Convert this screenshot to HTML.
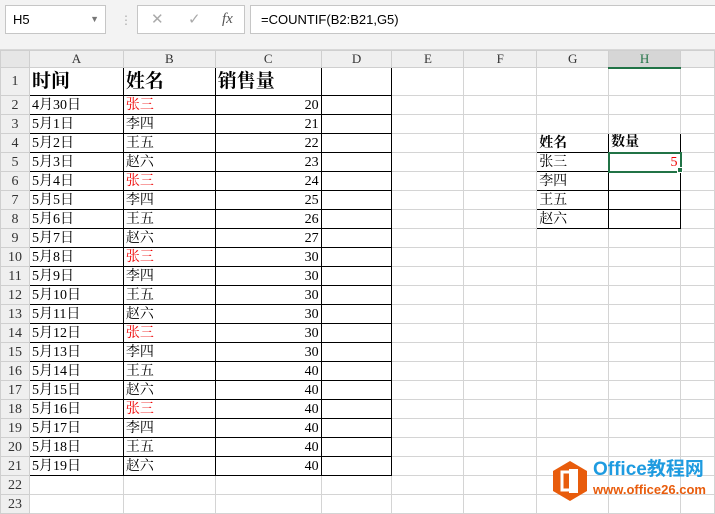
<!DOCTYPE html>
<html><head><meta charset="utf-8"><style>
*{margin:0;padding:0;box-sizing:border-box}
body{width:715px;height:509px;overflow:hidden;background:#fff;font-family:"Liberation Serif","Noto Serif CJK SC",serif;position:relative}
#top{position:absolute;left:0;top:0;width:715px;height:50px;background:#f3f3f3;border-bottom:1px solid #d8d8d8}
.box{position:absolute;background:#fff;border:1px solid #c6c6c6;top:5px;height:29px}
table{position:absolute;left:0;top:50px;border-collapse:collapse;table-layout:fixed}
td{height:19px;border:1px solid #d4d4d4;font-size:14px;line-height:17px;padding:0 2px;white-space:nowrap;overflow:hidden;color:#000}
tr.h td{height:17px;line-height:14px;background:#efefef;text-align:center;color:#333;font-size:13px;border-color:#cfcfcf}
td.r{background:#efefef;text-align:center;color:#333;font-size:14px;padding:0;border-color:#cfcfcf}
tr.t td{height:28px}
tr.t td.b{font-size:19px;font-weight:bold;line-height:25px}
td.k{border:1px solid #000}
td.n{text-align:right}
.red{color:#e00}
</style></head><body>
<div id="top">
<div class="box" style="left:5px;width:101px;font-family:'Liberation Sans',sans-serif;font-size:13px;line-height:27px;padding-left:7px">H5<span style="position:absolute;right:6px;top:0;font-size:9px;color:#777">▼</span></div>
<div style="position:absolute;left:120px;top:13px;color:#aaa;font-size:12px">⋮</div>
<div class="box" style="left:137px;width:108px;color:#aaa;font-family:'Liberation Sans',sans-serif;font-size:15px;line-height:27px"><span style="position:absolute;left:13px">✕</span><span style="position:absolute;left:50px">✓</span><span style="position:absolute;left:84px;color:#555;font-style:italic;font-family:'Liberation Serif',serif">fx</span></div>
<div class="box" style="left:250px;width:470px;font-family:'Liberation Sans',sans-serif;font-size:13px;line-height:27px;padding-left:10px">=COUNTIF(B2:B21,G5)</div>
</div>
<table>
<colgroup><col style="width:29px"><col style="width:94px"><col style="width:92px"><col style="width:106px"><col style="width:71px"><col style="width:72px"><col style="width:73px"><col style="width:72px"><col style="width:72px"><col style="width:34px"></colgroup>
<tr class="h"><td style="background:#e6e6e6"></td><td>A</td><td>B</td><td>C</td><td>D</td><td>E</td><td>F</td><td>G</td><td style="background:#d6d6d6;color:#217346;border-bottom:2px solid #217346">H</td><td></td></tr>
<tr class="t"><td class="r">1</td><td class="k b">时间</td><td class="k b">姓名</td><td class="k b">销售量</td><td class="k"></td><td></td><td></td><td></td><td></td><td></td></tr>
<tr><td class="r">2</td><td class="k">4月30日</td><td class="k red">张三</td><td class="k n">20</td><td class="k"></td><td></td><td></td><td></td><td></td><td></td></tr>
<tr><td class="r">3</td><td class="k">5月1日</td><td class="k">李四</td><td class="k n">21</td><td class="k"></td><td></td><td></td><td></td><td></td><td></td></tr>
<tr><td class="r">4</td><td class="k">5月2日</td><td class="k">王五</td><td class="k n">22</td><td class="k"></td><td></td><td></td><td class="k" style="font-weight:bold">姓名</td><td class="k" style="font-weight:bold">数量</td><td></td></tr>
<tr><td class="r">5</td><td class="k">5月3日</td><td class="k">赵六</td><td class="k n">23</td><td class="k"></td><td></td><td></td><td class="k">张三</td><td class="k n red" style="border:2px solid #217346">5</td><td></td></tr>
<tr><td class="r">6</td><td class="k">5月4日</td><td class="k red">张三</td><td class="k n">24</td><td class="k"></td><td></td><td></td><td class="k">李四</td><td class="k"></td><td></td></tr>
<tr><td class="r">7</td><td class="k">5月5日</td><td class="k">李四</td><td class="k n">25</td><td class="k"></td><td></td><td></td><td class="k">王五</td><td class="k"></td><td></td></tr>
<tr><td class="r">8</td><td class="k">5月6日</td><td class="k">王五</td><td class="k n">26</td><td class="k"></td><td></td><td></td><td class="k">赵六</td><td class="k"></td><td></td></tr>
<tr><td class="r">9</td><td class="k">5月7日</td><td class="k">赵六</td><td class="k n">27</td><td class="k"></td><td></td><td></td><td></td><td></td><td></td></tr>
<tr><td class="r">10</td><td class="k">5月8日</td><td class="k red">张三</td><td class="k n">30</td><td class="k"></td><td></td><td></td><td></td><td></td><td></td></tr>
<tr><td class="r">11</td><td class="k">5月9日</td><td class="k">李四</td><td class="k n">30</td><td class="k"></td><td></td><td></td><td></td><td></td><td></td></tr>
<tr><td class="r">12</td><td class="k">5月10日</td><td class="k">王五</td><td class="k n">30</td><td class="k"></td><td></td><td></td><td></td><td></td><td></td></tr>
<tr><td class="r">13</td><td class="k">5月11日</td><td class="k">赵六</td><td class="k n">30</td><td class="k"></td><td></td><td></td><td></td><td></td><td></td></tr>
<tr><td class="r">14</td><td class="k">5月12日</td><td class="k red">张三</td><td class="k n">30</td><td class="k"></td><td></td><td></td><td></td><td></td><td></td></tr>
<tr><td class="r">15</td><td class="k">5月13日</td><td class="k">李四</td><td class="k n">30</td><td class="k"></td><td></td><td></td><td></td><td></td><td></td></tr>
<tr><td class="r">16</td><td class="k">5月14日</td><td class="k">王五</td><td class="k n">40</td><td class="k"></td><td></td><td></td><td></td><td></td><td></td></tr>
<tr><td class="r">17</td><td class="k">5月15日</td><td class="k">赵六</td><td class="k n">40</td><td class="k"></td><td></td><td></td><td></td><td></td><td></td></tr>
<tr><td class="r">18</td><td class="k">5月16日</td><td class="k red">张三</td><td class="k n">40</td><td class="k"></td><td></td><td></td><td></td><td></td><td></td></tr>
<tr><td class="r">19</td><td class="k">5月17日</td><td class="k">李四</td><td class="k n">40</td><td class="k"></td><td></td><td></td><td></td><td></td><td></td></tr>
<tr><td class="r">20</td><td class="k">5月18日</td><td class="k">王五</td><td class="k n">40</td><td class="k"></td><td></td><td></td><td></td><td></td><td></td></tr>
<tr><td class="r">21</td><td class="k">5月19日</td><td class="k">赵六</td><td class="k n">40</td><td class="k"></td><td></td><td></td><td></td><td></td><td></td></tr>
<tr><td class="r">22</td><td></td><td></td><td></td><td></td><td></td><td></td><td></td><td></td><td></td></tr>
<tr><td class="r">23</td><td></td><td></td><td></td><td></td><td></td><td></td><td></td><td></td><td></td></tr>
</table>
<div style="position:absolute;left:677px;top:167px;width:6px;height:6px;background:#217346;border:1px solid #fff"></div>
<svg style="position:absolute;left:551px;top:460px" width="38" height="42" viewBox="0 0 38 42"><polygon points="19,1 36,11 36,31 19,41 2,31 2,11" fill="#e85c0c"/><rect x="11" y="12" width="14" height="18" fill="none" stroke="#fff" stroke-width="3"/><rect x="18" y="9" width="9" height="24" fill="#fff"/></svg>
<div style="position:absolute;left:593px;top:459px;font-family:'Liberation Sans','Noto Sans CJK SC',sans-serif;font-weight:bold;font-size:19px;color:#1e9be0;line-height:22px">Office教程网</div>
<div style="position:absolute;left:593px;top:482px;font-family:'Liberation Sans',sans-serif;font-weight:bold;font-size:13px;color:#e85c0c;line-height:16px">www.office26.com</div>
</body></html>
